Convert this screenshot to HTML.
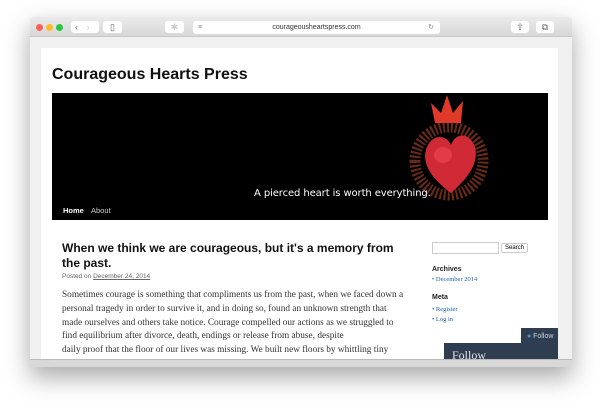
<!DOCTYPE html>
<html><head><style>
*{margin:0;padding:0;box-sizing:border-box}
body{width:600px;height:410px;background:#fff;position:relative;overflow:hidden;font-family:"Liberation Sans",sans-serif}
.win{position:absolute;left:30px;top:17px;width:542px;height:350px;background:#f0f0f0;box-shadow:0 10px 25px rgba(0,0,0,.35);border-radius:4px 4px 0 0;overflow:hidden}
.tb{position:absolute;left:0;top:0;width:542px;height:20px;background:linear-gradient(#ebebeb,#d8d8d8);border-bottom:1px solid #c8c8c8}
.dot{position:absolute;top:7px;width:7px;height:7px;border-radius:50%}
.btn{position:absolute;top:4px;height:12px;background:#fff;border-radius:3px;font-size:9px;color:#666;text-align:center;line-height:12px}
.url{position:absolute;left:163px;top:4px;width:247px;height:13px;background:#fff;border-radius:3px;font-size:7px;color:#333;text-align:center;line-height:13px}
.page{position:absolute;left:11px;top:31px;width:517px;height:320px;background:#fff;overflow:hidden}
.bot{position:absolute;left:0;top:342px;width:542px;height:8px;background:#d8d8d8;border-top:1px solid #bbb}
h1{position:absolute;left:11px;top:18px;font-size:16px;font-weight:bold;color:#111}
.hdr{position:absolute;left:11px;top:45px;width:496px;height:127px;background:#000}
.tag{position:absolute;left:202px;top:95px;color:#fff;font-size:10px;font-family:"DejaVu Sans",sans-serif;letter-spacing:-0.1px}
.nav{position:absolute;top:113px;font-size:7.5px;color:#fff}
h2{position:absolute;left:21px;top:193px;width:340px;font-size:12px;line-height:15px;font-weight:bold;color:#111}
.meta{position:absolute;left:21px;top:225px;font-size:6.5px;color:#666}
.txt{position:absolute;left:21px;top:241px;width:345px;font-family:"Liberation Serif",serif;font-size:9.3px;line-height:13.8px;color:#333}
.sb{position:absolute;left:391px;font-size:7px}
.follow{position:absolute;left:403px;top:295px;width:124px;height:40px;background:#2e3d50;color:#dfe3e8;font-family:"Liberation Serif",serif;font-size:12px;padding:5px 8px}
.fb{position:absolute;left:480px;top:280px;width:45px;height:17px;background:#2e3d50;color:#c9d1db;font-size:7px;line-height:17px;padding-left:6px}
</style></head><body>
<div class="win">
 <div class="tb">
  <div class="dot" style="left:6px;background:#fc5f57"></div>
  <div class="dot" style="left:16px;background:#fdbc2e"></div>
  <div class="dot" style="left:26px;background:#28c840"></div>
  <div class="btn" style="left:41px;width:28px;text-align:left;padding-left:4px">‹ <span style="color:#ccc;margin-left:6px">›</span></div>
  <div class="btn" style="left:73px;width:19px">▯</div>
  <div class="btn" style="left:135px;width:19px;color:#ccc">✱</div>
  <div class="url"><span style="position:absolute;left:5px;color:#888">≡</span>courageousheartspress.com<span style="position:absolute;right:6px;color:#888">↻</span></div>
  <div class="btn" style="left:481px;width:18px">⇧</div>
  <div class="btn" style="left:506px;width:18px">⧉</div>
 </div>
 <div class="page">
  <h1>Courageous Hearts Press</h1>
  <div class="hdr">
   <svg style="position:absolute;left:355px;top:0" width="90" height="120">
    <path d="M42 40 m-34 30 a34 34 0 1 0 68 0 a34 34 0 1 0 -68 0" fill="none" stroke="#6a2a18" stroke-width="11" stroke-dasharray="2 2" transform="translate(0,-2)"/>
    <path d="M28 30 L24 10 L34 20 L40 2 L46 20 L56 8 L54 30Z" fill="#e03a2a"/>
    <path d="M44 100 C22 84 14 68 20 54 C26 40 40 42 44 52 C48 40 62 38 68 54 C72 70 62 84 44 100Z" fill="#d02a36"/>
    <ellipse cx="36" cy="62" rx="9" ry="8" fill="#f04a56" opacity=".6"/>
   </svg>
   <div class="tag">A pierced heart is worth everything.</div>
   <div class="nav" style="left:11px;font-weight:bold">Home</div>
   <div class="nav" style="left:39px;color:#ccc">About</div>
  </div>
  <h2>When we think we are courageous, but it's a memory from the past.</h2>
  <div class="meta">Posted on <span style="text-decoration:underline">December 24, 2014</span></div>
  <div class="txt">Sometimes courage is something that compliments us from the past, when we faced down a personal tragedy in order to survive it, and in doing so, found an unknown strength that made ourselves and others take notice. Courage compelled our actions as we struggled to find equilibrium after divorce, death, endings or release from abuse, despite<br>daily proof that the floor of our lives was missing. We built new floors by whittling tiny planks sunup to sundown, in the thousands of tiny gestures that meant caring for our</div>
  <div class="sb" style="top:194px;width:67px;height:12px;border:1px solid #ccc"></div>
  <div class="sb" style="left:460px;top:195px;width:27px;height:10px;border:1px solid #ccc;border-radius:2px;font-size:6px;text-align:center;line-height:9px">Search</div>
  <div class="sb" style="top:218px;font-weight:bold;color:#222">Archives</div>
  <div class="sb" style="top:228px;font-family:'Liberation Serif',serif;color:#1e5fb3;font-size:6.5px">• December 2014</div>
  <div class="sb" style="top:246px;font-weight:bold;color:#222">Meta</div>
  <div class="sb" style="top:257px;font-family:'Liberation Serif',serif;color:#1e5fb3;font-size:6.5px;line-height:9.5px">• Register<br>• Log in</div>
  <div class="follow">Follow</div>
  <div class="fb"><span style="color:#3aa0d8">●</span> Follow</div>
 </div>
 <div class="bot"></div>
</div>
</body></html>
